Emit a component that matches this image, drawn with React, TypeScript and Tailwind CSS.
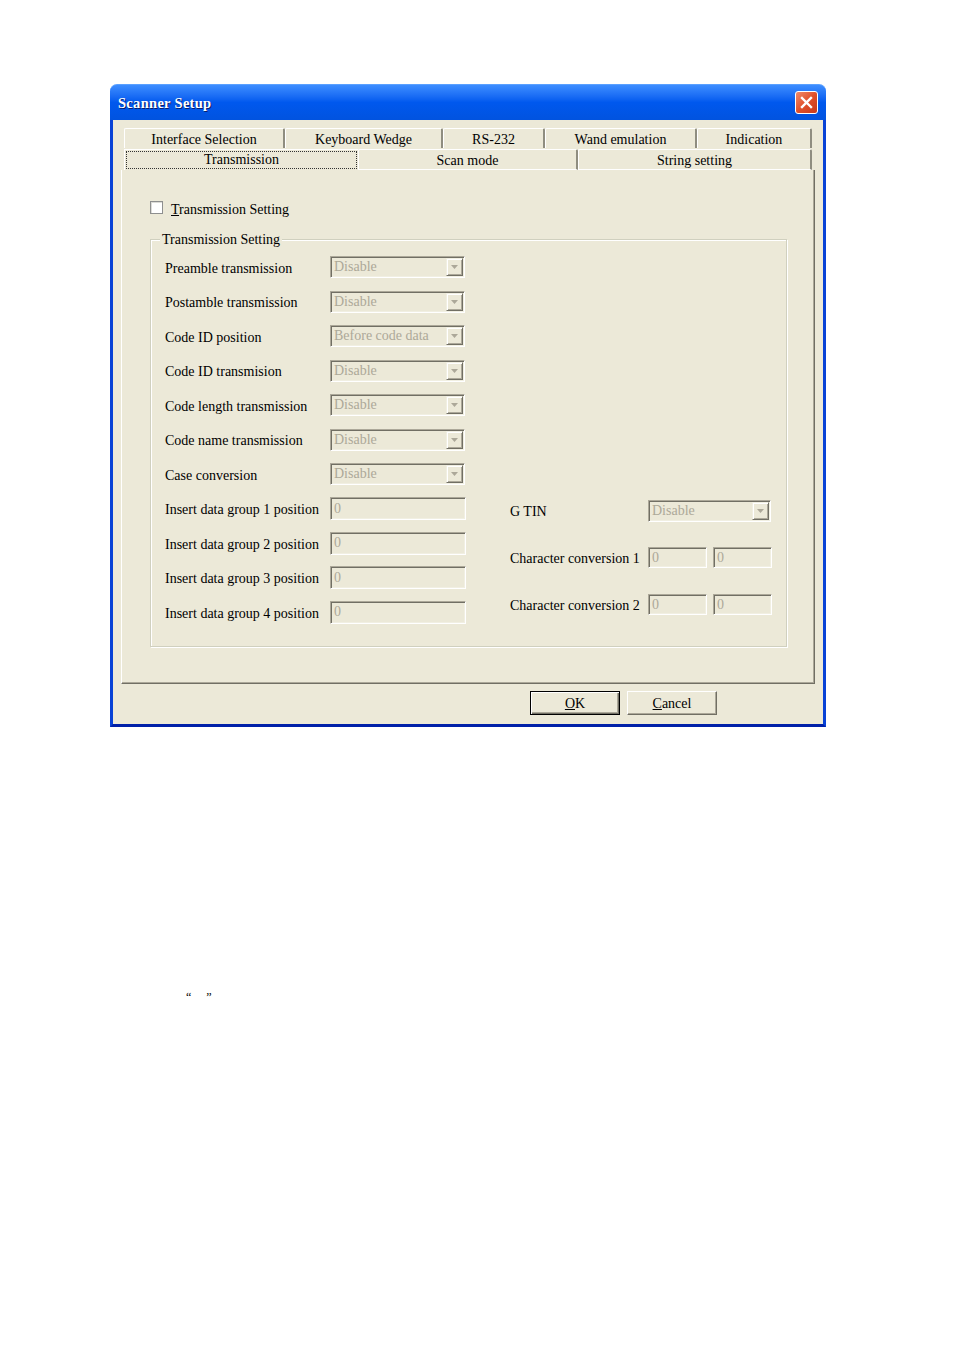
import React from "react";

const sunken =
  "border border-t-[#ACA899] border-l-[#ACA899] border-b-white border-r-white shadow-[inset_1px_1px_0_#716F64,inset_-1px_-1px_0_#F1EFE2]";

function Combo({ value, w = "w-[135px]" }: { value: string; w?: string }) {
  return (
    <div className={`${w} h-[22px] ${sunken} flex items-center justify-between bg-[#ECE9D8]`}>
      <span className="pl-[3px] text-[#ACA899] leading-none whitespace-nowrap">{value}</span>
      <div className="mr-[1px] w-[17px] h-[18px] bg-[#ECE9D8] border border-t-[#F1EFE2] border-l-[#F1EFE2] border-b-[#716F64] border-r-[#716F64] shadow-[inset_1px_1px_0_#fff,inset_-1px_-1px_0_#ACA899] flex items-center justify-center">
        <svg width="7" height="4" viewBox="0 0 7 4">
          <path d="M0 0h7L3.5 4z" fill="#ACA899" />
        </svg>
      </div>
    </div>
  );
}

function Field({ w = "w-[136px]", h = "h-[23px]" }: { w?: string; h?: string }) {
  return (
    <div className={`${w} ${h} ${sunken} flex items-center bg-[#ECE9D8]`}>
      <span className="pl-[3px] text-[#ACA899] leading-none">0</span>
    </div>
  );
}

const leftRows: { label: string; ctrl: React.ReactNode }[] = [
  { label: "Preamble transmission", ctrl: <Combo value="Disable" /> },
  { label: "Postamble transmission", ctrl: <Combo value="Disable" /> },
  { label: "Code ID position", ctrl: <Combo value="Before code data" /> },
  { label: "Code ID transmision", ctrl: <Combo value="Disable" /> },
  { label: "Code length transmission", ctrl: <Combo value="Disable" /> },
  { label: "Code name transmission", ctrl: <Combo value="Disable" /> },
  { label: "Case conversion", ctrl: <Combo value="Disable" /> },
  { label: "Insert data group 1 position", ctrl: <Field /> },
  { label: "Insert data group 2 position", ctrl: <Field /> },
  { label: "Insert data group 3 position", ctrl: <Field /> },
  { label: "Insert data group 4 position", ctrl: <Field /> },
];

const row1 = [
  { t: "Interface Selection", w: "w-[161px]" },
  { t: "Keyboard Wedge", w: "w-[158px]" },
  { t: "RS-232", w: "w-[102px]" },
  { t: "Wand emulation", w: "w-[152px]" },
  { t: "Indication", w: "w-[115px]" },
];

const tabCls =
  "h-full flex items-center justify-center border-t border-l border-t-white border-l-white border-r-2 border-r-[#8F8D80] rounded-t-[2px] bg-[#ECE9D8]";

export default function App() {
  return (
    <div
      className="w-[954px] h-[1350px] bg-white pt-[84px] pl-[110px] text-[14px] text-black"
      style={{ fontFamily: '"Liberation Serif", "Noto Sans CJK TC", serif' }}
    >
      <div className="w-[716px] flex flex-col">
        {/* Title bar */}
        <div className="h-[36px] rounded-t-[7px] flex items-center justify-between bg-gradient-to-b from-[#3D8DFF] via-[#0058EE] to-[#0153DF] border-t border-[#5AA0FF]">
          <span className="pl-[8px] translate-y-[1px] text-white font-bold text-[14.5px] [text-shadow:1px_1px_0_#0A1E6A] tracking-[0.3px]">
            Scanner Setup
          </span>
          <div className="mr-[8px] w-[23px] h-[23px] rounded-[3px] border border-white bg-gradient-to-br from-[#F08A6A] via-[#E0502A] to-[#C8391B] flex items-center justify-center">
            <svg width="13" height="13" viewBox="0 0 13 13">
              <path d="M2 2l9 9M11 2l-9 9" stroke="#fff" strokeWidth="2.4" strokeLinecap="square" />
            </svg>
          </div>
        </div>

        {/* Body */}
        <div className="h-[607px] bg-[#ECE9D8] border-x-[3px] border-b-[3px] border-x-[#0842D6] border-b-[#0020A8] pl-[8px] pt-[8px]">
          {/* Tabs */}
          <div className="ml-[3px] w-[688px] flex flex-col">
            <div className="h-[20px] flex">
              {row1.map((t) => (
                <div key={t.t} className={`${t.w} ${tabCls}`}>
                  <span className="leading-none translate-y-[1px]">{t.t}</span>
                </div>
              ))}
            </div>
            <div className="h-[21px] flex mt-[1px]">
              <div className="w-[234px] h-full flex bg-[#ECE9D8] border-t border-l border-white">
                <div className="flex-1 m-[1px] border border-dotted border-[#333] flex items-start justify-center">
                  <span className="leading-none mt-[1px]">Transmission</span>
                </div>
              </div>
              <div className={`w-[220px] ${tabCls} border-b border-b-white`}>
                <span className="leading-none mt-[3px]">Scan mode</span>
              </div>
              <div className={`w-[234px] ${tabCls} border-b border-b-white`}>
                <span className="leading-none mt-[3px]">String setting</span>
              </div>
            </div>
          </div>

          {/* Panel */}
          <div className="w-[694px] h-[514px] border-l border-white border-r border-b border-r-[#716F64] border-b-[#716F64] shadow-[inset_-1px_-1px_0_#ACA899] pl-[28px] pt-[31px]">
            <div className="flex items-center h-[13px]">
              <div className="w-[13px] h-[13px] bg-white border border-[#8E8F8F] shadow-[inset_1px_1px_0_#DCDCD7]" />
              <span className="ml-[8px] leading-none translate-y-[2px]">
                <span className="underline">T</span>ransmission Setting
              </span>
            </div>

            {/* Group box */}
            <div className="relative mt-[25px] w-[637px] h-[408px] border border-[#D0D0BF] shadow-[1px_1px_0_#fff,inset_1px_1px_0_#fff]">
              <span className="absolute left-[9px] top-[-7px] px-[2px] bg-[#ECE9D8] leading-none">
                Transmission Setting
              </span>
              <div className="flex pl-[14px] pt-[10px]">
                <div className="flex flex-col">
                  {leftRows.map((r) => (
                    <div key={r.label} className="h-[34.5px] flex items-center">
                      <span className="w-[165px] whitespace-nowrap translate-y-[1px]">{r.label}</span>
                      {r.ctrl}
                    </div>
                  ))}
                </div>
                <div className="ml-[44px] mt-[237px] flex flex-col">
                  <div className="h-[47px] flex items-center">
                    <span className="w-[138px] whitespace-nowrap translate-y-[1px]">G TIN</span>
                    <Combo value="Disable" w="w-[123px]" />
                  </div>
                  <div className="h-[47px] flex items-center">
                    <span className="w-[138px] whitespace-nowrap translate-y-[1px]">Character conversion 1</span>
                    <Field w="w-[59px]" h="h-[21px]" />
                    <div className="ml-[6px]">
                      <Field w="w-[59px]" h="h-[21px]" />
                    </div>
                  </div>
                  <div className="h-[47px] flex items-center">
                    <span className="w-[138px] whitespace-nowrap translate-y-[1px]">Character conversion 2</span>
                    <Field w="w-[59px]" h="h-[21px]" />
                    <div className="ml-[6px]">
                      <Field w="w-[59px]" h="h-[21px]" />
                    </div>
                  </div>
                </div>
              </div>
            </div>
          </div>

          {/* Buttons */}
          <div className="flex mt-[7px] ml-[409px] gap-[7px]">
            <button className="w-[90px] h-[24px] bg-[#ECE9D8] border border-black shadow-[inset_1px_1px_0_#fff,inset_-1px_-1px_0_#716F64,inset_-2px_-2px_0_#ACA899] flex items-center justify-center">
              <span className="leading-none translate-y-[1px]">
                <span className="underline">O</span>K
              </span>
            </button>
            <button className="w-[90px] h-[24px] bg-[#ECE9D8] border border-t-white border-l-white border-b-[#716F64] border-r-[#716F64] shadow-[inset_-1px_-1px_0_#ACA899] flex items-center justify-center">
              <span className="leading-none translate-y-[1px]">
                <span className="underline">C</span>ancel
              </span>
            </button>
          </div>
        </div>
      </div>

      <div className="mt-[264px] ml-[76px] text-[12px] leading-none text-black">
        <span>“</span>
        <span className="ml-[15px]">”</span>
      </div>
    </div>
  );
}
